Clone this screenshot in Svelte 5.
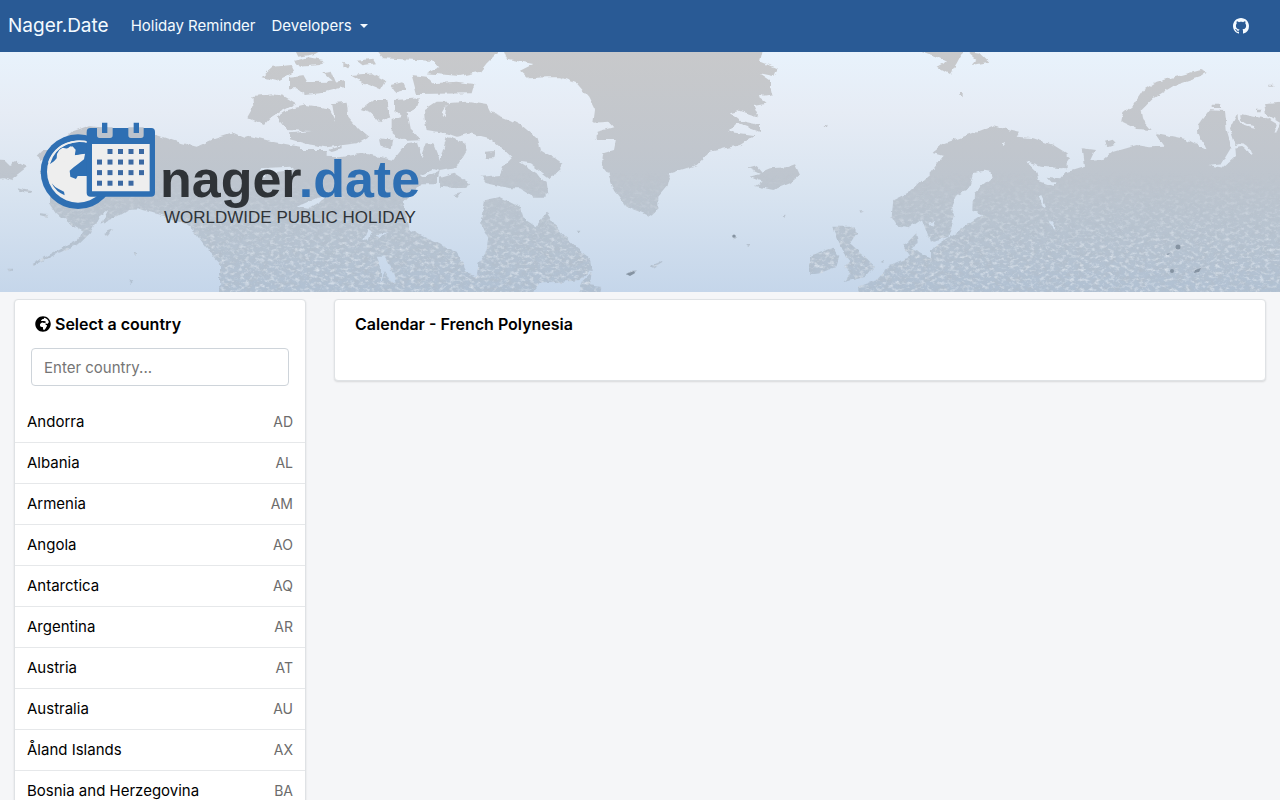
<script>
  const countries = [
    ['Andorra', 'AD'],
    ['Albania', 'AL'],
    ['Armenia', 'AM'],
    ['Angola', 'AO'],
    ['Antarctica', 'AQ'],
    ['Argentina', 'AR'],
    ['Austria', 'AT'],
    ['Australia', 'AU'],
    ['Åland Islands', 'AX'],
    ['Bosnia and Herzegovina', 'BA']
  ];

  let query = $state('');
  const shown = $derived(
    countries.filter(([name]) => name.toLowerCase().includes(query.toLowerCase()))
  );

  // Day squares of the calendar in the logo: [column, row]
  const days = [];
  for (let row = 0; row < 4; row++) {
    for (let col = 0; col < 5; col++) {
      if ((row === 0 && col === 0) || (row === 3 && col === 4)) continue;
      days.push([201 + col * 31.5, 117 + row * 31.7]);
    }
  }
</script>

<nav class="navbar">
  <a class="brand" href="#home">Nager.Date</a>
  <a class="link" href="#reminder">Holiday Reminder</a>
  <button class="link" type="button">Developers<span class="caret"></span></button>
  <a class="github" href="#github" aria-label="GitHub">
    <svg viewBox="0 0 16 16" width="16" height="16" fill="currentColor">
      <path d="M8 0C3.58 0 0 3.58 0 8c0 3.54 2.29 6.53 5.47 7.59.4.07.55-.17.55-.38 0-.19-.01-.82-.01-1.49-2.01.37-2.53-.49-2.69-.94-.09-.23-.48-.94-.82-1.13-.28-.15-.68-.52-.01-.53.63-.01 1.08.58 1.23.82.72 1.21 1.87.87 2.33.66.07-.52.28-.87.51-1.07-1.78-.2-3.64-.89-3.64-3.95 0-.87.31-1.59.82-2.15-.08-.2-.36-1.02.08-2.12 0 0 .67-.21 2.2.82.64-.18 1.32-.27 2-.27s1.36.09 2 .27c1.53-1.04 2.2-.82 2.2-.82.44 1.1.16 1.92.08 2.12.51.56.82 1.27.82 2.15 0 3.07-1.87 3.75-3.65 3.95.29.25.54.73.54 1.48 0 1.07-.01 1.93-.01 2.2 0 .21.15.46.55.38A8.01 8.01 0 0 0 16 8c0-4.42-3.58-8-8-8z" />
    </svg>
  </a>
</nav>

<header class="banner">
  <svg class="map" viewBox="0 0 1280 240" preserveAspectRatio="xMidYMid slice" aria-hidden="true">
    <defs>
      <linearGradient id="sea" x1="0" y1="0" x2="0" y2="1">
        <stop offset="0" stop-color="#e8f2fc" />
        <stop offset=".25" stop-color="#e6ecf5" />
        <stop offset=".55" stop-color="#dae5f1" />
        <stop offset="1" stop-color="#c5d6ea" />
      </linearGradient>
      <linearGradient id="ground" x1="0" y1="0" x2="0" y2="1">
        <stop offset="0" stop-color="#c8c9cb" />
        <stop offset=".4" stop-color="#c1c6cd" />
        <stop offset=".7" stop-color="#b9c4d0" />
        <stop offset="1" stop-color="#b1c1d3" />
      </linearGradient>
      <linearGradient id="fade" x1="0" y1="0" x2="0" y2="1">
        <stop offset=".5" stop-color="#000" />
        <stop offset=".85" stop-color="#fff" />
      </linearGradient>
      <filter id="rough" x="0" y="0" width="1280" height="240" filterUnits="userSpaceOnUse">
        <feTurbulence type="fractalNoise" baseFrequency=".14" numOctaves="2" seed="4" />
        <feDisplacementMap in="SourceGraphic" scale="5" xChannelSelector="R" yChannelSelector="G" />
        <feGaussianBlur stdDeviation=".4" />
      </filter>
      <filter id="grain" x="0" y="0" width="100%" height="100%">
        <feTurbulence type="fractalNoise" baseFrequency=".13 .2" numOctaves="4" seed="9" />
        <feColorMatrix values="0 0 0 0 .45  0 0 0 0 .51  0 0 0 0 .58  1.4 0 0 0 -.58" />
      </filter>
      <filter id="glint" x="0" y="0" width="100%" height="100%">
        <feTurbulence type="fractalNoise" baseFrequency=".2 .3" numOctaves="4" seed="21" />
        <feColorMatrix values="0 0 0 0 .85  0 0 0 0 .89  0 0 0 0 .94  1.6 0 0 0 -.78" />
      </filter>
      <mask id="low" maskUnits="userSpaceOnUse" x="0" y="0" width="1280" height="240">
        <rect width="1280" height="240" fill="url(#fade)" />
      </mask>
      <mask id="land" maskUnits="userSpaceOnUse" x="0" y="0" width="1280" height="240">
        <g filter="url(#rough)" fill="#fff">
          <!-- Chukotka, Alaska and the Aleutians -->
          <g transform="translate(0 -2) scale(.33333)">
            <path d="M-20 328L15 330 30 345 50 335 80 352 50 375 35 392 10 385-20 388ZM50 415l45 8-5 6-30-5ZM120 370L140 340 110 320 130 300 165 300 175 280 215 245 270 226 320 232 400 240 470 255 530 275 590 290 640 268 700 248 730 262 800 285 850 300 980 300 980 740 750 740 700 690 670 650 640 620 610 580 585 545 560 525 500 500 455 488 420 478 385 480 350 500 300 525 325 480 296 500 270 550 240 580 165 614 100 648 95 642 160 606 230 570 250 545 205 520 170 490 150 460 150 420ZM120 490l25 2-5 8-20-4ZM310 550l30-12-15 22ZM22 656l20 0 0 6-16 2ZM400 608l14 4-8 8ZM388 688l12 4-6 10Z" />
          </g>
          <!-- Northern Canada -->
          <g transform="translate(240 -2) scale(.33333)">
            <path d="M-60 300L-40 262 0 270 30 258 100 275 180 290 180 318 300 322 370 310 460 330 500 280 530 275 545 322 560 280 580 280 600 330 620 260 670 275 680 300 650 350 600 360 590 400 545 400 490 460 510 540 590 580 650 605 670 640 680 665 710 678 715 640 740 600 745 560 720 520 735 450 780 440 840 470 850 505 890 532 920 488 960 545 1010 595 1050 625 1055 660 1020 690 960 696 900 697 870 740-60 740Z" />
            <path d="M37 138L100 133 130 137 168 160 120 185 90 205 72 225 22 202 40 170ZM110 200L140 180 200 165 265 175 285 212 276 160 320 155 325 200 360 240 385 260 350 280 260 292 200 282 150 268 150 250 215 243 140 240 120 215ZM362 180L400 150 442 150 450 200 420 220 395 192ZM465 150L540 145 530 175 500 190 510 240 540 268 480 270 455 250 455 210 488 200 465 180ZM420 265l40 5-5 25-30-8ZM150 80L190 75 202 96 278 95 250 70 275 65 287 95 315 90 315 110 240 130 195 135 170 115 150 115ZM65 82L100 50 155 45 165 65 110 92ZM165 32l40-10 45 8-10 15-60 5ZM165 0l80 0-20 12-50 8ZM310 35l20 8-5 15-15-10ZM350 32l50-6 8 14-40 6ZM330 75L400 70 436 90 420 118 370 98ZM452 105l35-8 10 22-30 8ZM515 75L560 80 580 100 650 95 703 102 695 130 530 132ZM410 0L780 0 760 20 740 40 720 65 660 78 560 70 600 50 570 32 430 25ZM555 215L552 180 590 155 625 155 604 190 614 205 620 160 680 155 695 185 680 155 740 165 750 185 810 210 850 230 890 265 900 300 950 330 962 358 930 385 900 362 870 340 835 335 890 370 920 410 920 440 880 440 840 415 810 415 740 400 725 380 780 375 790 350 815 325 790 300 750 265 690 250 650 260 620 250 560 240ZM600 380L640 368 690 400 680 417 600 410ZM640 435l25-6-10 15ZM735 305l30-2-5 22-25 0ZM265 300l40-12 0 10-30 8Z" />
            <g fill="#000">
              <path d="M60 355L150 350 160 358 110 366 85 362 70 380ZM170 470l60-26 45-10-70 42ZM370 570l14-34 10 8-12 28ZM405 555l38-8-20 18ZM410 620l25 0 20 40 12 35-14 0-18-35-12 40 0-50ZM540 375l40-18 20 6-50 22Z" />
            </g>
          </g>
          <!-- Greenland and Iceland -->
          <g transform="translate(540 -2) scale(.33333)">
            <path d="M-110 0L668 0 660 35 710 55 700 78 660 70 690 90 690 120 655 140 680 158 640 165 655 200 600 182 570 190 600 212 660 225 660 246 590 220 565 245 645 256 600 285 510 305 470 345 390 370 380 410 355 440 355 480 335 500 260 470 225 425 205 370 185 345 190 310 222 300 228 270 170 270 170 245 220 232 205 215 160 218 165 180 145 140 110 100 60 82 20 82-35 85-60 62-20 42-100 26ZM670 118l25-4 5 22-30 4ZM625 355L650 348 665 365 690 355 740 352 765 343 780 375 750 400 700 420 645 408 665 395 628 380 660 372ZM0 310l40 10 28 22-28 40-40-30ZM0 385l20 10 5 38-25-4ZM255 675l18-14 18 0-10 12ZM330 648l30-14 8 4-25 16ZM578 556h12v10h-12ZM845 232l18-8-2 8ZM722 496l15-2-4 10ZM110 542l14 0-4 10ZM620 582h10v8h-10ZM115 726l15-35 25-25-5 40 35 5-5 20Z" />
          </g>
          <!-- Svalbard, Scandinavia and the British Isles -->
          <g transform="translate(820 -2) scale(.33333)">
            <path d="M300 2L430 2 410 40 390 72 350 50 378 35 350 20ZM440 2L480 8 508 35 455 45 470 28ZM418 132h10v6h-10ZM40 530L95 530 112 547 90 580 130 615 165 650 140 680 70 696 92 672 70 650 88 630 62 590ZM0 605L40 593 55 620 45 655 10 668-30 674-30 620ZM220 450L270 425 330 370 370 318 335 308 365 283 430 260 520 226 560 236 600 245 590 260 640 265 700 285 740 310 740 740 115 740 115 710 170 690 210 645 270 620 250 590 290 548 300 510 265 535 235 530 215 500ZM180 635l10-6 0 10ZM118 484l10 0-6 8Z" />
            <path fill="#000" d="M290 530L306 508 330 575 385 562 405 495 395 470 410 435 445 418 460 370 490 362 512 366 515 385 462 430 460 482 490 495 575 485 582 497 490 518 505 555 470 545 455 590 435 605 420 617 370 615 340 628 296 605 275 590 296 580ZM616 333L660 345 740 355 740 400 700 408 655 392 650 365ZM584 466l25-6 14 25-18 14ZM650 410l10 40 14 25-18-15-10-30ZM685 515l25 5 8 20-25-5ZM545 280l15-4-10 12ZM325 520l20-8-8 18Z" />
            <path d="M405 550l15-8-8 18ZM245 588l25-15 15 8-12 14Z" />
          </g>
          <!-- Novaya Zemlya and northern Russia -->
          <g transform="translate(1040 -2) scale(.33333)">
            <path d="M-30 292L0 278 40 290 90 325 70 355 0 350-30 340ZM-30 400L0 398 40 408 75 368 135 350 128 295 165 300 150 332 190 330 220 305 290 285 330 292 375 290 345 248 440 268 498 298 475 250 473 225 510 178 555 180 560 240 575 290 545 340 505 345 550 353 588 318 585 280 570 235 592 190 640 200 680 205 672 160 750 152 750 740-330 740-330 600ZM20 380l40 5 5 12-30 0ZM195 275l20-6 12 12-25 8ZM515 164h28v10h-28ZM648 176h14v8h-14ZM688 104h12v6h-12ZM244 215L250 190 280 165 310 120 350 95 400 82 480 60 500 68 480 82 400 108 340 145 305 180 310 210 335 240 290 237Z" />
            <g fill="none" stroke="#000" stroke-width="8">
              <path d="M585 290Q620 270 634 316M600 180Q585 225 645 232M665 190L715 220 705 250M0 440l14 30M30 515l16 18" />
            </g>
          </g>
        </g>
      </mask>
    </defs>
    <rect width="1280" height="240" fill="url(#sea)" />
    <g mask="url(#land)">
      <rect width="1280" height="240" fill="url(#ground)" />
      <g mask="url(#low)">
        <rect width="1280" height="240" filter="url(#grain)" />
        <rect width="1280" height="240" filter="url(#glint)" />
      </g>
    </g>
    <g fill="#8593a2">
      <circle cx="1178" cy="195" r="2.5" />
      <circle cx="1172" cy="219" r="2" />
      <circle cx="734" cy="184" r="1.6" />
      <path d="M1195 218l6-2-2 4-5 1zM626 222l8-3 1 2-5 3zM1166 202l4-1-2 2z" />
    </g>
  </svg>

  <div class="logo">
    <svg viewBox="30 36 348 264" width="116" height="88" aria-hidden="true">
      <circle cx="144" cy="185" r="112" fill="#2e6fb3" />
      <circle cx="144" cy="185" r="93" fill="#eeeeee" />
      <path d="M60 162Q72 120 112 103Q145 90 175 98V198H143L138 207 121 200 119 182 131 172 144 162 162 148 165 132 134 136 132 114 121 109 112 116 98 113 88 120 81 132 80 145 72 154Z" fill="#2e6fb3" />
      <path d="M134 137L137 119 127 109 107 118 92 129 96 147 120 167 150 151 160 142 164 131Z" fill="#eeeeee" />
      <path d="M65 220Q74 232 86 237L102 245 104 256Q78 246 65 220Z" fill="#2e6fb3" />
      <path d="M56 158Q76 102 138 94Q158 92 175 97" fill="none" stroke="#eeeeee" stroke-width="5" />
      <path d="M181 54H364Q375 54 375 66V248Q375 260 363 260H182Q170 260 170 248V66Q170 54 181 54Z" fill="#2e6fb3" />
      <path d="M186 102H359V244H186Z" fill="#eeeeee" />
      <path d="M201 52V76Q201 84 209 84H240Q248 84 248 76V52ZM295 52V76Q295 84 303 84H333Q341 84 341 76V52Z" fill="#bcc3cc" />
      <path d="M216 38H232V69H216ZM311 38H327V69H311Z" fill="#2e6fb3" />
      {#each days as [x, y]}
        <rect {x} {y} width="15" height="15" fill="#3b69a3" />
      {/each}
    </svg>
    <div class="wordmark">
      <div class="name">nager<span>.date</span></div>
      <div class="claim">WORLDWIDE PUBLIC HOLIDAY</div>
    </div>
  </div>
</header>

<main class="content">
  <section class="card">
    <h2>
      <svg viewBox="0 0 496 512" width="16" height="16" aria-hidden="true">
        <path d="M248 8C111.03 8 0 119.03 0 256s111.03 248 248 248 248-111.03 248-248S384.97 8 248 8zm160 215.5v6.93c0 5.87-3.32 11.24-8.57 13.86l-15.39 7.7a15.485 15.485 0 0 1-15.53-.97l-18.21-12.14a15.52 15.52 0 0 0-13.5-1.81l-2.65.88c-9.7 3.23-13.66 14.79-7.99 23.3l13.24 19.86c2.87 4.31 7.71 6.9 12.89 6.9h8.21c8.56 0 15.5 6.94 15.5 15.5v11.34c0 3.35-1.09 6.62-3.1 9.3l-18.74 24.98c-1.42 1.9-2.39 4.1-2.83 6.43l-4.3 22.83c-.62 3.29-2.29 6.29-4.76 8.56a159.608 159.608 0 0 0-25 29.16l-13.03 19.55a27.756 27.756 0 0 1-23.09 12.36c-10.51 0-20.12-5.94-24.82-15.34a78.902 78.902 0 0 1-8.33-35.29V367.5c0-8.56-6.94-15.5-15.5-15.5h-25.88c-14.49 0-28.38-5.76-38.63-16a54.659 54.659 0 0 1-16-38.63v-14.06c0-17.19 8.1-33.38 21.85-43.7l27.58-20.69a54.663 54.663 0 0 1 32.78-10.93h.89c8.48 0 16.85 1.97 24.43 5.77l14.72 7.36c3.68 1.84 7.93 2.14 11.83.84l47.31-15.77c6.33-2.11 10.6-8.03 10.6-14.7 0-8.56-6.94-15.5-15.5-15.5h-10.09c-4.11 0-8.05-1.63-10.96-4.54l-6.92-6.92a15.493 15.493 0 0 0-10.96-4.54H199.5c-8.56 0-15.5-6.94-15.5-15.5v-4.4c0-7.11 4.84-13.31 11.74-15.04l14.45-3.61c3.74-.94 7-3.23 9.14-6.44l8.08-12.11c2.87-4.31 7.71-6.9 12.89-6.9h24.21c8.56 0 15.5-6.94 15.5-15.5v-21.7C359.23 71.63 422.86 131.02 441.93 208H423.5c-8.56 0-15.5 6.94-15.5 15.5z" />
      </svg>
      <label for="country">Select a country</label>
    </h2>
    <input id="country" type="text" placeholder="Enter country..." bind:value={query} />
    <ul>
      {#each shown as [name, code]}
        <li><a href="#{code}"><span>{name}</span><small>{code}</small></a></li>
      {/each}
    </ul>
  </section>

  <section class="card calendar">
    <h2>Calendar - French Polynesia</h2>
  </section>
</main>

<style>
  :global(html) {
    scrollbar-width: none;
  }
  :global(body) {
    margin: 0;
    background: #f5f6f8;
    color: #000;
    font: 15px/24px Inter, "Liberation Sans", sans-serif;
  }
  a {
    color: inherit;
    text-decoration: none;
  }
  .navbar {
    display: flex;
    align-items: center;
    height: 52px;
    padding: 0 8px;
    background: #295a95;
    color: #f4faff;
  }
  .brand {
    margin-right: 14px;
    font-size: 19px;
  }
  .link {
    display: flex;
    align-items: center;
    padding: 8px;
    border: 0;
    background: none;
    color: inherit;
    font: inherit;
  }
  .caret {
    margin-left: 8px;
    border: 4px solid transparent;
    border-top-color: currentColor;
    border-bottom: 0;
  }
  .github {
    display: flex;
    margin-left: auto;
    padding: 8px 23px;
  }
  .banner {
    position: relative;
    height: 240px;
    overflow: hidden;
  }
  .map {
    position: absolute;
    inset: 0;
    width: 100%;
    height: 100%;
  }
  .logo {
    position: relative;
    display: flex;
    gap: 4px;
    padding: 70px 40px;
  }
  .wordmark {
    padding-top: 28px;
    font-family: "Liberation Sans", Arial, sans-serif;
    color: #2f3337;
  }
  .name {
    font-size: 52px;
    font-weight: 700;
    line-height: 58px;
  }
  .name span {
    color: #2e6fb3;
  }
  .claim {
    padding-left: 4px;
    font-size: 17px;
    line-height: 20px;
  }
  .content {
    display: grid;
    grid-template-columns: 1fr 3fr;
    align-items: start;
    padding: 7px 0;
  }
  .card {
    margin: 0 14px;
    border: 1px solid #dfe2e5;
    border-radius: 4px;
    background: #fff;
    box-shadow: 0 1px 2px rgba(0, 0, 0, 0.12);
  }
  .calendar {
    min-height: 80px;
  }
  h2 {
    display: flex;
    align-items: center;
    gap: 4px;
    margin: 0;
    padding: 12px 20px;
    font-size: 16px;
    font-weight: 600;
    line-height: 24px;
  }
  input {
    display: block;
    box-sizing: border-box;
    width: calc(100% - 32px);
    height: 38px;
    margin: 0 16px 16px;
    padding: 0 12px;
    border: 1px solid #ced4da;
    border-radius: 4px;
    font: inherit;
  }
  input::placeholder {
    color: #757575;
  }
  ul {
    margin: 0;
    padding: 0;
    list-style: none;
  }
  li {
    border-bottom: 1px solid #e6e8ea;
  }
  li a {
    display: flex;
    align-items: center;
    justify-content: space-between;
    padding: 8px 12px;
  }
  small {
    color: #6c6c6c;
    font-size: 14px;
  }
</style>
